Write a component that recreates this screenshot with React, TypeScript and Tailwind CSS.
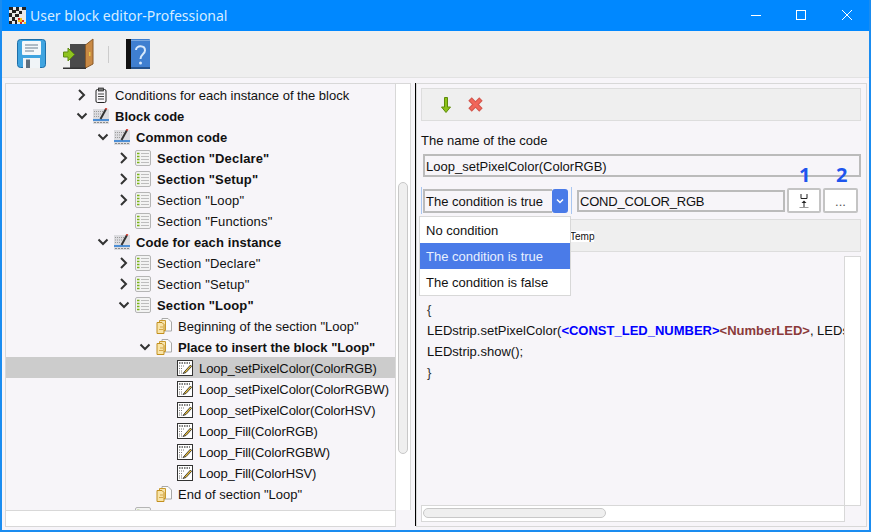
import React from "react";

const Caret = ({ open }: { open?: boolean }) => (
  <svg width="12" height="12" viewBox="0 0 12 12" className="shrink-0">
    <path d={open ? "M1.5 3.5 L6 8 L10.5 3.5" : "M3 1 L8 6 L3 11"} fill="none" stroke="#333" strokeWidth="2" />
  </svg>
);

const ClipIcon = () => (
  <svg width="16" height="16" viewBox="0 0 16 16" className="shrink-0">
    <rect x="3" y="2.5" width="10" height="13" rx="1.5" fill="#f7f5f9" stroke="#222" />
    <rect x="5.5" y="1" width="5" height="3" fill="#777" stroke="#222" strokeWidth="0.7" />
    <path d="M5 7h6M5 9.5h6M5 12h6" stroke="#444" />
  </svg>
);

const CodeIcon = () => (
  <svg width="16" height="16" viewBox="0 0 16 16" className="shrink-0">
    <rect x="0" y="1" width="16" height="15" fill="#dcdce0" />
    <path d="M1 3.5h9M1 6h7M1 8.5h6" stroke="#9a9a9a" strokeDasharray="1 1" />
    <rect x="0" y="11" width="16" height="2" fill="#4d8fd6" />
    <path d="M13 1 L7.5 11" stroke="#333" strokeWidth="2" />
    <path d="M13.5 0 L12.6 1.6" stroke="#d9463c" strokeWidth="2" />
    <path d="M1 14.5h14" stroke="#8a8a8a" strokeDasharray="2 1" />
  </svg>
);

const ListIcon = () => (
  <svg width="16" height="16" viewBox="0 0 16 16" className="shrink-0">
    <rect x="0.5" y="0.5" width="15" height="15" rx="1.5" fill="#f3f3f3" stroke="#b5b5b5" />
    <path d="M6 3.5h8M6 6.5h8M6 9.5h8M6 12.5h8" stroke="#bdbdbd" />
    <path d="M2 3.5h2.5M2 6.5h2.5M2 9.5h2.5M2 12.5h2.5" stroke="#7ab317" strokeWidth="1.6" />
  </svg>
);

const PagesIcon = () => (
  <svg width="16" height="16" viewBox="0 0 16 16" className="shrink-0">
    <path d="M6 0.5h6l3.5 3.5v9h-9.5z" fill="#fbfbfb" stroke="#a8a8a8" />
    <path d="M3.5 2.5h6v10h-6z" fill="#f6e3ae" stroke="#c99a2c" />
    <path d="M1 4.5h5l2 2v9h-7z" fill="#f9e4a8" stroke="#c28f1e" />
    <path d="M4 9h3M3 11.5h4" stroke="#d4a84a" />
  </svg>
);

const EditIcon = () => (
  <svg width="16" height="16" viewBox="0 0 16 16" className="shrink-0">
    <rect x="0.5" y="0.5" width="15" height="15" fill="#fff" stroke="#333" />
    <path d="M2 3h11" stroke="#555" strokeDasharray="1.5 1" strokeWidth="1.4" />
    <path d="M2 6h5M2 8.5h3M2 11h3M2 13h4" stroke="#777" strokeDasharray="1 1" />
    <path d="M13.5 5 L8 11 L6 13.5 L9 12.5 L14.5 6.5 z" fill="#f1c232" stroke="#333" strokeWidth="0.9" />
  </svg>
);

const icons = { clip: ClipIcon, code: CodeIcon, list: ListIcon, pages: PagesIcon, edit: EditIcon };

type Row = {
  level: number;
  icon: keyof typeof icons;
  label: string;
  caret?: "open" | "closed";
  bold?: boolean;
  selected?: boolean;
};

const rows: Row[] = [
  { level: 0, icon: "clip", label: "Conditions for each instance of the block", caret: "closed" },
  { level: 0, icon: "code", label: "Block code", caret: "open", bold: true },
  { level: 1, icon: "code", label: "Common code", caret: "open", bold: true },
  { level: 2, icon: "list", label: 'Section "Declare"', caret: "closed", bold: true },
  { level: 2, icon: "list", label: 'Section "Setup"', caret: "closed", bold: true },
  { level: 2, icon: "list", label: 'Section "Loop"', caret: "closed" },
  { level: 2, icon: "list", label: 'Section "Functions"' },
  { level: 1, icon: "code", label: "Code for each instance", caret: "open", bold: true },
  { level: 2, icon: "list", label: 'Section "Declare"', caret: "closed" },
  { level: 2, icon: "list", label: 'Section "Setup"', caret: "closed" },
  { level: 2, icon: "list", label: 'Section "Loop"', caret: "open", bold: true },
  { level: 3, icon: "pages", label: 'Beginning of the section "Loop"' },
  { level: 3, icon: "pages", label: 'Place to insert the block "Loop"', caret: "open", bold: true },
  { level: 4, icon: "edit", label: "Loop_setPixelColor(ColorRGB)", selected: true },
  { level: 4, icon: "edit", label: "Loop_setPixelColor(ColorRGBW)" },
  { level: 4, icon: "edit", label: "Loop_setPixelColor(ColorHSV)" },
  { level: 4, icon: "edit", label: "Loop_Fill(ColorRGB)" },
  { level: 4, icon: "edit", label: "Loop_Fill(ColorRGBW)" },
  { level: 4, icon: "edit", label: "Loop_Fill(ColorHSV)" },
  { level: 3, icon: "pages", label: 'End of section "Loop"' },
  { level: 2, icon: "list", label: "" },
];

const paddings = ["pl-[70px]", "pl-[91px]", "pl-[112px]", "pl-[133px]", "pl-[154px]"];
const trackings = ["", "tracking-[0.1px]", "tracking-[0.15px]", "", "tracking-[-0.1px]"];

function TreeRow({ row }: { row: Row }) {
  const Icon = icons[row.icon];
  return (
    <div
      className={`flex items-center h-[21px] shrink-0 whitespace-nowrap ${paddings[row.level]} ${
        row.selected ? "bg-[#cccccc]" : ""
      } ${row.bold ? "font-bold" : ""}`}
    >
      <div className="w-[17px] flex justify-start shrink-0">
        {row.caret && <Caret open={row.caret === "open"} />}
      </div>
      <Icon />
      <span className={`ml-[6px] pt-[2px] ${trackings[row.level]}`}>{row.label}</span>
    </div>
  );
}

const Floppy = () => (
  <svg width="29" height="30" viewBox="0 0 29 30" className="shrink-0">
    <rect x="0.500" y="0.500" width="28" height="28" rx="3" fill="#3fa4e0" stroke="#1c6ea8" />
    <rect x="5" y="2" width="19" height="14" rx="1" fill="#f4f8fb" />
    <path d="M8 6h13M8 9h13M8 12h9" stroke="#6b7f8f" />
    <rect x="6" y="19" width="17" height="10" fill="#f0f4f7" />
    <rect x="9" y="20.500" width="4" height="8.500" fill="#5f6f7c" />
  </svg>
);

const Door = () => (
  <svg width="31" height="32" viewBox="0 0 31 32" className="shrink-0">
    <rect x="7" y="6" width="16" height="24" fill="#4a4a4a" />
    <path d="M22.500 7 L30 1 V26 L22.500 30z" fill="#c98a45" stroke="#8a5a28" />
    <rect x="26" y="14" width="1.500" height="4" fill="#e8c84a" />
    <rect x="0" y="29.500" width="23" height="1.500" fill="#333" />
    <path d="M0.500 14h4.500v-4l6.500 6.500-6.500 6.500v-4h-4.500z" fill="#8fc31f" stroke="#5f8a12" />
  </svg>
);

const HelpBook = () => (
  <svg width="24" height="32" viewBox="0 0 24 32" className="shrink-0">
    <rect x="0" y="1" width="24" height="30" rx="1" fill="#3f7fd0" />
    <rect x="0" y="1" width="5" height="30" fill="#111" />
    <rect x="5" y="29" width="19" height="2" fill="#24528c" />
    <path d="M5 2.500h19" stroke="#7ba9e0" />
    <path d="M10 12 C10 7 19 7 19 12.500 C19 16 14.500 16 14.500 21" fill="none" stroke="#d8e9fb" strokeWidth="2" />
    <circle cx="14.500" cy="25" r="1.500" fill="#d8e9fb" />
  </svg>
);

const TitleLogo = () => (
  <svg width="17" height="17" viewBox="0 0 17 17" shapeRendering="crispEdges" className="shrink-0">
    <rect width="17" height="17" fill="#e8e8e8" />
    <path d="M0 0h4v3H0zM7 0h3v4H7zM13 0h4v3h-4zM3 3h4v3H3zM10 4h3v3h-3zM0 6h3v4H0zM6 7h4v3H6zM3 10h3v4H3zM0 14h3v3H0zM6 13h2v4H6z" fill="#222" />
    <path d="M9 11h2v2H9zM13 13h2v2h-2zM11 15h2v2h-2z" fill="#d8281f" />
    <path d="M11 11h2v2h-2zM11 13h2v2h-2zM15 15h2v2h-2zM9 13h2v2H9z" fill="#f3c31c" />
  </svg>
);

export default function App() {
  return (
    <div className="w-[871px] h-[532px] overflow-hidden border-x-2 border-b-2 border-[#1a8cf0] bg-[#f7f5f9] text-[13px] text-[#111] flex flex-col font-['Liberation_Sans',sans-serif] relative box-border">
      {/* title bar */}
      <div className="h-[31px] shrink-0 bg-[#0088ff] flex items-center pl-[7px] -mx-[2px]">
        <div className="ml-[2px]"><TitleLogo /></div>
        <span className="ml-[4px] text-[14px] text-[#d6ecff] font-['Noto_Sans',sans-serif]">User block editor-Professional</span>
        <div className="ml-auto flex items-center pr-px">
          <svg width="46" height="31" viewBox="0 0 46 31"><path d="M19 15.500h10" stroke="#fff" /></svg>
          <svg width="46" height="31" viewBox="0 0 46 31"><rect x="18.500" y="10.500" width="9" height="9" fill="none" stroke="#fff" /></svg>
          <svg width="46" height="31" viewBox="0 0 46 31"><path d="M18 10l10 10M28 10l-10 10" stroke="#fff" /></svg>
        </div>
      </div>
      {/* toolbar */}
      <div className="h-[47px] shrink-0 bg-[#efefef] border-b border-[#e2e2e2] flex items-center pl-[15px]">
        <Floppy />
        <div className="ml-[17px]"><Door /></div>
        <div className="ml-[14px] w-px h-[17px] bg-[#cccccc]" />
        <div className="ml-[17px]"><HelpBook /></div>
      </div>
      {/* body */}
      <div className="flex-1 flex pl-[3px] pt-[5px] min-h-0">
        {/* left pane */}
        <div className="w-[406px] h-[444px] shrink-0 flex flex-col">
          <div className="flex h-[427px] shrink-0">
            <div className="w-[390px] border-l border-t border-[#d8d8d8] overflow-hidden flex flex-col">
              {rows.map((r, i) => (
                <TreeRow key={i} row={r} />
              ))}
            </div>
            <div className="w-[16px] bg-white border border-b-0 border-[#d8d8d8] relative">
              <div className="absolute left-[2px] top-[98px] w-[10px] h-[272px] rounded-[5px] bg-[#efefef] border border-[#c8c8c8]" />
            </div>
          </div>
          <div className="w-[391px] h-[17px] shrink-0 bg-white border border-[#d8d8d8]" />
        </div>
        {/* divider */}
        <div className="ml-[4px] w-px h-[443px] bg-black shrink-0" />
        {/* right pane */}
        <div className="relative w-[451px] h-[444px] shrink-0 border border-[#d8d8d8] pl-[4px] pr-[4px] pt-[4px] flex flex-col">
          <div className="h-[33px] w-[440px] shrink-0 bg-[#efefef] border border-[#dddddd] flex items-center pl-[19px] gap-[17px]">
            <svg width="10" height="16" viewBox="0 0 10 16">
              <path d="M3.500 0.500h3v9.500h3L5 15.500 0.500 10h3z" fill="#8cc21a" stroke="#5d8a0a" />
            </svg>
            <svg width="15" height="15" viewBox="1 1 14 14">
              <path d="M2 4.500L4.500 2 8 5.500 11.500 2 14 4.500 10.500 8 14 11.500 11.500 14 8 10.500 4.500 14 2 11.500 5.500 8z" fill="#f2665a" stroke="#d4584e" />
            </svg>
          </div>
          <div className="mt-[11px] h-[17px] leading-[17px] whitespace-nowrap">The name of the code</div>
          <div className="mt-[5px] ml-[2px] w-[438px] h-[23px] shrink-0 border-2 border-[#bbbbbb] pl-px leading-[21px] whitespace-nowrap">Loop_setPixelColor(ColorRGB)</div>
          <div className="mt-[10px] h-[27px] flex items-start shrink-0">
            <div className="w-[151px] h-[27px] shrink-0 border-x border-[#a9c6f0] px-px flex">
              <div className="w-[129px] h-[24px] mt-[2px] border-2 border-[#bbbbbb] border-r-0 pl-px leading-[22px] whitespace-nowrap">The condition is true</div>
              <div className="w-[16px] h-[24px] mt-[2px] bg-[#4a7be8] rounded-[3px] flex items-center justify-center">
                <svg width="10" height="10" viewBox="0 0 10 10"><path d="M2 3.500L5 6.500 8 3.500" fill="none" stroke="#fff" strokeWidth="1.500" /></svg>
              </div>
            </div>
            <div className="ml-[5px] w-[208px] h-[22px] mt-[3px] shrink-0 border-2 border-[#bbbbbb] pl-px leading-[20px] tracking-[-0.2px] whitespace-nowrap">COND_COLOR_RGB</div>
            <div className="ml-[2px] mt-px w-[34px] h-[25px] shrink-0 bg-white border-2 border-[#c4c4c4] rounded-[2px] flex items-center justify-center">
              <svg width="12" height="16" viewBox="0 0 12 16">
                <path d="M3 1v4.500h6V1" fill="none" stroke="#222" />
                <path d="M6 14V9" fill="none" stroke="#222" />
                <path d="M3.500 10h5L6 7.500z" fill="#222" />
                <path d="M1.500 14.500h9" stroke="#999" />
              </svg>
            </div>
            <div className="ml-[2px] mt-px w-[35px] h-[25px] shrink-0 bg-white border-2 border-[#c4c4c4] rounded-[2px] flex items-end justify-center leading-[18px] text-[#555]">...</div>
          </div>
          <div className="mt-[5px] w-[440px] h-[33px] shrink-0 bg-[#efefef] border border-[#dddddd] flex items-center pl-[148px] pt-[2px]">
            <span className="bg-white text-[10px] leading-[11px]">Temp</span>
          </div>
          <div className="mt-[4px] flex h-[250px] shrink-0">
            <div className="w-[423px] overflow-hidden pt-[43px] pl-[6px] leading-[21px] whitespace-nowrap">
              <div className="text-[#333]">{"{"}</div>
              <div>
                LEDstrip.setPixelColor(
                <b className="text-[#0000ff]">{"<CONST_LED_NUMBER>"}</b>
                <b className="text-[#8b3a3a]">{"<NumberLED>"}</b>, LEDstrip
              </div>
              <div>LEDstrip.show();</div>
              <div className="text-[#333]">{"}"}</div>
            </div>
            <div className="w-[17px] bg-white border border-[#d8d8d8]" />
          </div>
          <div className="w-[424px] h-[17px] shrink-0 bg-white border border-[#d8d8d8] -mt-px pl-px pt-[2px]">
            <div className="w-[183px] h-[10px] rounded-[5px] bg-[#efefef] border border-[#c8c8c8]" />
          </div>
          {/* overlays */}
          <div className="absolute left-[2px] top-[132px] w-[152px] h-[80px] bg-white border border-[#d8d8d8] flex flex-col">
            <div className="h-[26px] pl-[6px] leading-[28px]">No condition</div>
            <div className="h-[26px] pl-[6px] leading-[28px] bg-[#4a7be8] text-[#e8f0ff]">The condition is true</div>
            <div className="h-[26px] pl-[6px] leading-[28px]">The condition is false</div>
          </div>
          <span className="absolute left-[382px] top-[79px] text-[20px] leading-[24px] font-bold text-[#1f55ee] font-['Open_Sans',sans-serif]">1</span>
          <span className="absolute left-[419px] top-[79px] text-[20px] leading-[24px] font-bold text-[#1f55ee] font-['Open_Sans',sans-serif]">2</span>
        </div>
      </div>
    </div>
  );
}
